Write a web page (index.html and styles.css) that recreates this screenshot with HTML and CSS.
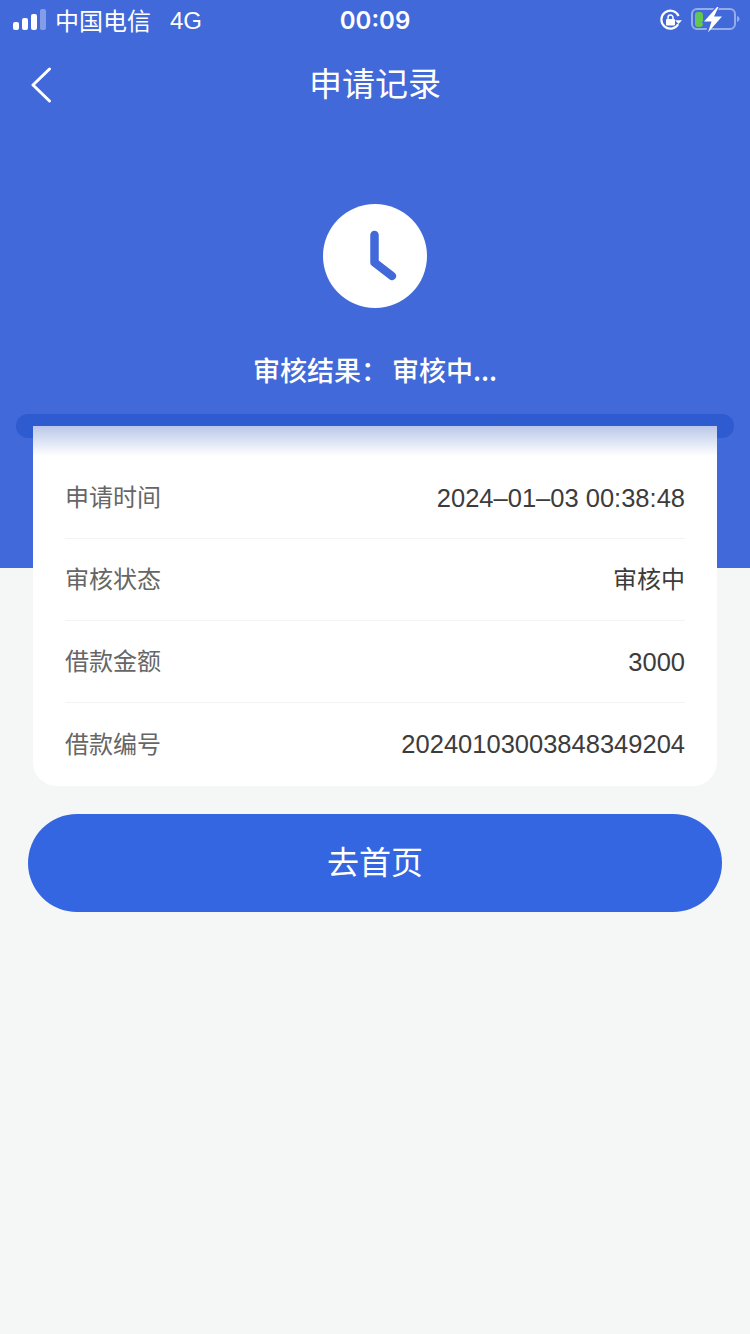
FILE: index.html
```html
<!DOCTYPE html>
<html>
<head>
    <meta charset="utf-8">
    <title>申请记录</title>
    <link rel="stylesheet" href="styles.css">
</head>
<body>
    <div class="hero">
        <div class="status-bar">
            <div class="status-left">
                <svg class="signal" width="33" height="22" viewBox="0 0 33 22">
                    <rect x="0" y="13" width="6" height="8" rx="2" fill="#fff"/>
                    <rect x="9" y="9" width="6" height="12" rx="2" fill="#fff"/>
                    <rect x="18" y="5" width="6" height="16" rx="2" fill="#fff"/>
                    <rect x="27" y="0" width="6" height="21" rx="2" fill="#fff" opacity="0.35"/>
                </svg>
                <span class="carrier">中国电信</span>
                <span class="network">4G</span>
            </div>
            <div class="status-time">00:09</div>
            <div class="status-right">
                <svg class="lock" width="22" height="22" viewBox="0 0 22 22">
                    <path d="M18.200 15.200A9 9 0 1 1 18.600 7" fill="none" stroke="#fff" stroke-width="2.200"/>
                    <path d="M15 11.200h7l-3.500 3.800z" fill="#fff"/>
                    <rect x="6" y="10" width="9" height="6.500" rx="1" fill="#fff"/>
                    <path d="M8 10V8.500a2.500 2.500 0 0 1 5 0V10" fill="none" stroke="#fff" stroke-width="1.500"/>
                </svg>
                <svg class="battery" width="49" height="26" viewBox="0 0 49 26">
                    <rect x="1" y="2" width="43" height="20" rx="5" fill="none" stroke="#fff" stroke-opacity="0.45" stroke-width="2"/>
                    <rect x="4" y="5" width="8" height="15" rx="3" fill="#62c554"/>
                    <path d="M46 9c1.500.4 2.500 1.600 2.500 3s-1 2.600-2.500 3z" fill="#fff" fill-opacity="0.45"/>
                    <path d="M26 -2 10.500 16h7l-3 11 18-19h-8l5-10z" fill="#4169d9"/>
                    <path d="M26 0 13 14.500h7.500l-3.500 11 14-16h-8l4.500-9.500z" fill="#fff"/>
                </svg>
            </div>
        </div>
        <div class="nav">
            <svg class="back" width="22" height="36" viewBox="0 0 22 36">
                <path d="M19.500 2 3 18l16.500 16" fill="none" stroke="#fff" stroke-width="3" stroke-linecap="round" stroke-linejoin="round"/>
            </svg>
            <div class="nav-title">申请记录</div>
        </div>
        <div class="clock">
            <svg width="104" height="104" viewBox="0 0 104 104">
                <circle cx="52" cy="52" r="52" fill="#fff"/>
                <path d="M51.500 31v27.500l17.500 13.500" fill="none" stroke="#4169d9" stroke-width="8.500" stroke-linecap="round" stroke-linejoin="round"/>
            </svg>
        </div>
        <div class="result">审核结果<span class="result-colon">：</span>审核中...</div>
        <div class="slot"></div>
    </div>

    <div class="card">
        <div class="row">
            <span class="row-label">申请时间</span>
            <span class="row-value">2024–01–03 00:38:48</span>
        </div>
        <div class="row">
            <span class="row-label">审核状态</span>
            <span class="row-value row-value-cjk">审核中</span>
        </div>
        <div class="row">
            <span class="row-label">借款金额</span>
            <span class="row-value">3000</span>
        </div>
        <div class="row">
            <span class="row-label">借款编号</span>
            <span class="row-value">20240103003848349204</span>
        </div>
    </div>

    <div class="home-btn">去首页</div>
</body>
</html>
```
FILE: styles.css
```css
* {
    box-sizing: border-box;
}
body {
    margin: 0;
    background: #f5f6f6;
    font-family: "Noto Sans CJK SC", "Liberation Sans", sans-serif;
}
.hero {
    height: 568px;
    background: #4169d9;
    color: #fff;
    overflow: hidden;
}
.status-bar {
    display: grid;
    grid-template-columns: 1fr auto 1fr;
    align-items: center;
    height: 40px;
    padding: 0 10px 0 13px;
}
.status-left {
    display: flex;
    align-items: center;
}
.carrier {
    margin-left: 9px;
    font-size: 24px;
    line-height: 40px;
}
.network {
    margin-left: 19px;
    padding-top: 1px;
    font-family: "Liberation Sans", sans-serif;
    font-size: 24px;
}
.signal {
    display: block;
}
.status-time {
    margin-right: 3px;
    font-family: Inter, sans-serif;
    font-size: 24px;
    font-weight: 600;
}
.status-right {
    display: flex;
    align-items: center;
    justify-content: flex-end;
    gap: 9px;
}
.nav {
    display: flex;
    align-items: center;
    justify-content: center;
    position: relative;
    height: 88px;
}
.back {
    position: absolute;
    left: 30px;
    top: 27px;
}
.nav-title {
    padding-bottom: 4px;
    font-size: 33px;
}
.clock {
    display: flex;
    justify-content: center;
    margin-top: 76px;
}
.clock svg {
    display: block;
}
.result {
    margin-top: 42px;
    height: 40px;
    line-height: 40px;
    text-align: center;
    font-size: 27px;
    font-weight: 500;
}
.result-colon {
    letter-spacing: 4px;
}
.slot {
    height: 24px;
    margin: 24px 16px 0;
    background: #2f5bd0;
    border-radius: 12px;
}
.card {
    margin: -142px 33px 0;
    position: relative;
    padding: 31px 32px 0;
    height: 360px;
    background: linear-gradient(#b9c7e8, #fff 30px);
    border-radius: 0 0 24px 24px;
}
.row {
    display: flex;
    align-items: center;
    justify-content: space-between;
    height: 82px;
    border-bottom: 1px solid #f3f3f3;
}
.row:last-child {
    border-bottom: none;
}
.row-label {
    padding-bottom: 4px;
    font-size: 24px;
    color: #666;
}
.row-value {
    padding-top: 1px;
    font-family: "Liberation Sans", sans-serif;
    font-size: 25.500px;
    color: #3c3c3c;
}
.row-value-cjk {
    padding: 0 0 4px;
    font-family: "Noto Sans CJK SC", sans-serif;
    font-size: 24px;
}
.home-btn {
    margin: 28px 28px 0;
    height: 98px;
    line-height: 92px;
    text-align: center;
    font-size: 32px;
    color: #fff;
    background: #3366e0;
    border-radius: 49px;
}
```
